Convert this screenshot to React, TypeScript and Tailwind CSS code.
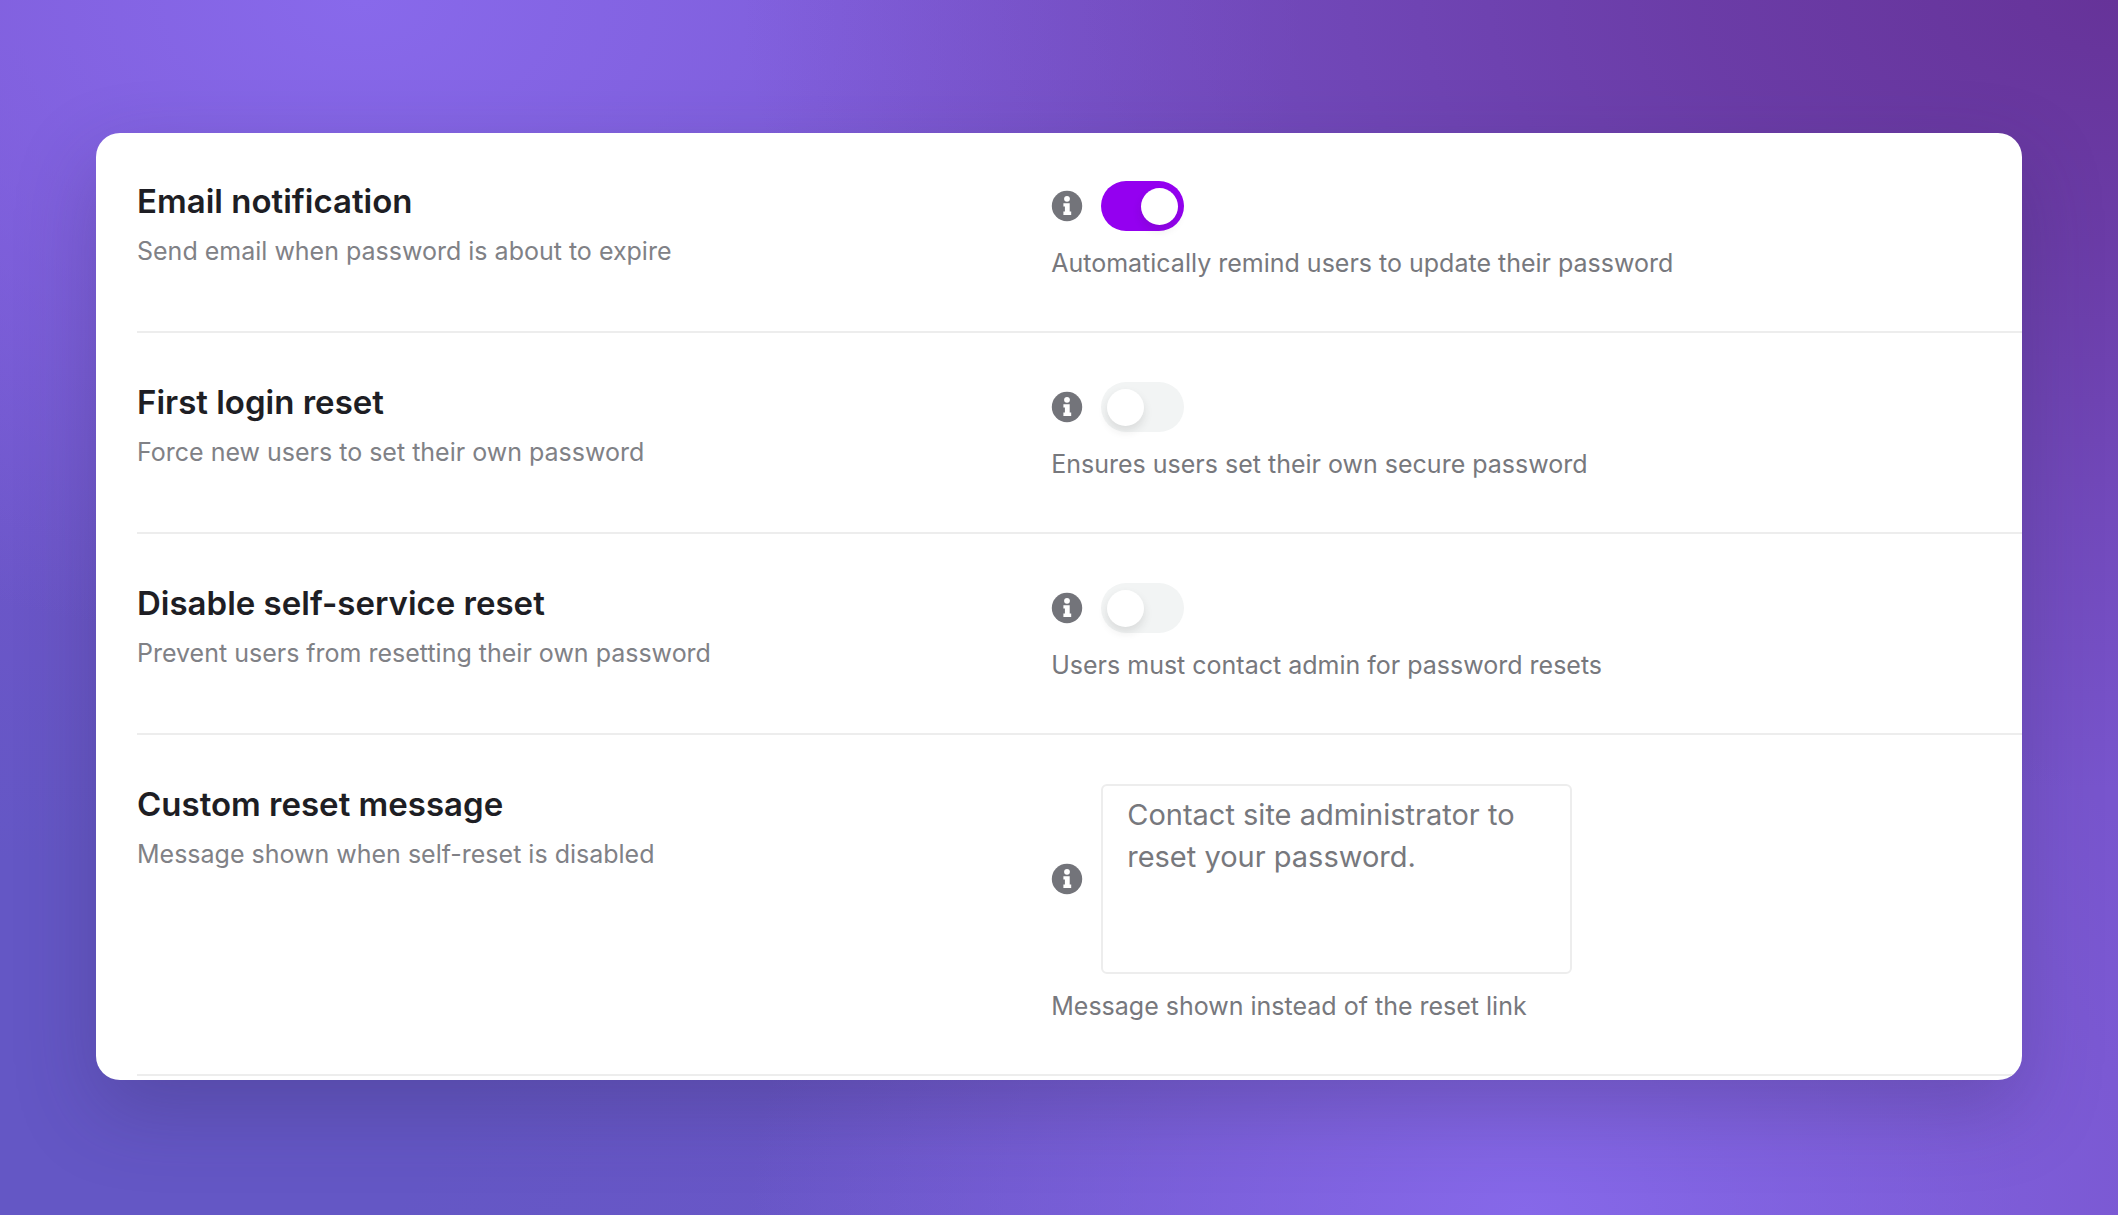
import React, { useState } from 'react';

function InfoIcon() {
    return (
        <svg viewBox="0 0 32 32" className="size-8 shrink-0" aria-hidden="true">
            <circle cx="16" cy="16" r="15.2" fill="#73747a" />
            <circle cx="16" cy="8.8" r="2.9" fill="#fff" />
            <path d="M12.4 13.2h6.3v8.4h1.5v3.4h-7.8v-3.4h1.5v-5h-1.5z" fill="#fff" />
        </svg>
    );
}

function Toggle({ id, initial }: { id: string; initial: boolean }) {
    const [on, setOn] = useState(initial);

    return (
        <button
            id={id}
            type="button"
            role="switch"
            aria-checked={on}
            onClick={() => setOn(!on)}
            className={`flex h-[50px] w-[83px] shrink-0 items-center rounded-full px-1.5 ${
                on ? 'justify-end bg-[#9400f0]' : 'justify-start bg-[#f2f4f4]'
            }`}
        >
            <span className="size-[37px] rounded-full bg-white shadow-[0_5px_10px_rgba(39,39,39,0.12)]" />
        </button>
    );
}

function SettingRow({
    id,
    title,
    description,
    hint,
    children,
}: {
    id: string;
    title: string;
    description: string;
    hint: string;
    children: React.ReactNode;
}) {
    return (
        <div className="grid grid-cols-[48.5%_1fr] border-b-2 border-[#ededed] pt-12 pb-12">
            <div>
                <label htmlFor={id} className="block text-[33px] leading-10 font-semibold text-[#1e1e24]">
                    {title}
                </label>
                <p className="mt-2.5 text-[25px] leading-10 text-[#808186]">{description}</p>
            </div>
            <div>
                <div className="flex items-center gap-[18px]">
                    <InfoIcon />
                    {children}
                </div>
                <p className="mt-3 text-[25px] leading-10 text-[#77787d]">{hint}</p>
            </div>
        </div>
    );
}

export default function App() {
    return (
        <main className="min-h-screen bg-[#7855cd] bg-[radial-gradient(ellipse_at_100%_0%,#663399_0%,#663399bb_14%,#66339955_30%,transparent_46%),radial-gradient(ellipse_at_17%_0%,#8869eb_0%,#8869ebaa_13%,transparent_38%),radial-gradient(ellipse_at_72%_100%,#8668e9_0%,#8668e9aa_12%,transparent_36%),radial-gradient(ellipse_at_0%_90%,#6457c5_0%,#6457c5_15%,transparent_68%)] px-24 py-[133px] font-['Inter',sans-serif]">
            <section className="overflow-hidden rounded-3xl bg-white pb-1 pl-[41px] shadow-[0_30px_80px_rgba(50,40,90,0.28)]">
                <div className="grid gap-px">
                    <SettingRow
                        id="email-notification"
                        title="Email notification"
                        description="Send email when password is about to expire"
                        hint="Automatically remind users to update their password"
                    >
                        <Toggle id="email-notification" initial={true} />
                    </SettingRow>
                    <SettingRow
                        id="first-login-reset"
                        title="First login reset"
                        description="Force new users to set their own password"
                        hint="Ensures users set their own secure password"
                    >
                        <Toggle id="first-login-reset" initial={false} />
                    </SettingRow>
                    <SettingRow
                        id="disable-self-service"
                        title="Disable self-service reset"
                        description="Prevent users from resetting their own password"
                        hint="Users must contact admin for password resets"
                    >
                        <Toggle id="disable-self-service" initial={false} />
                    </SettingRow>
                    <SettingRow
                        id="custom-reset-message"
                        title="Custom reset message"
                        description="Message shown when self-reset is disabled"
                        hint="Message shown instead of the reset link"
                    >
                        <textarea
                            id="custom-reset-message"
                            defaultValue="Contact site administrator to reset your password."
                            className="h-[190px] w-[471px] resize-none rounded-md border-2 border-[#ededed] px-6 py-2 text-[29px] leading-[42px] text-[#77787d]"
                        />
                    </SettingRow>
                </div>
            </section>
        </main>
    );
}
